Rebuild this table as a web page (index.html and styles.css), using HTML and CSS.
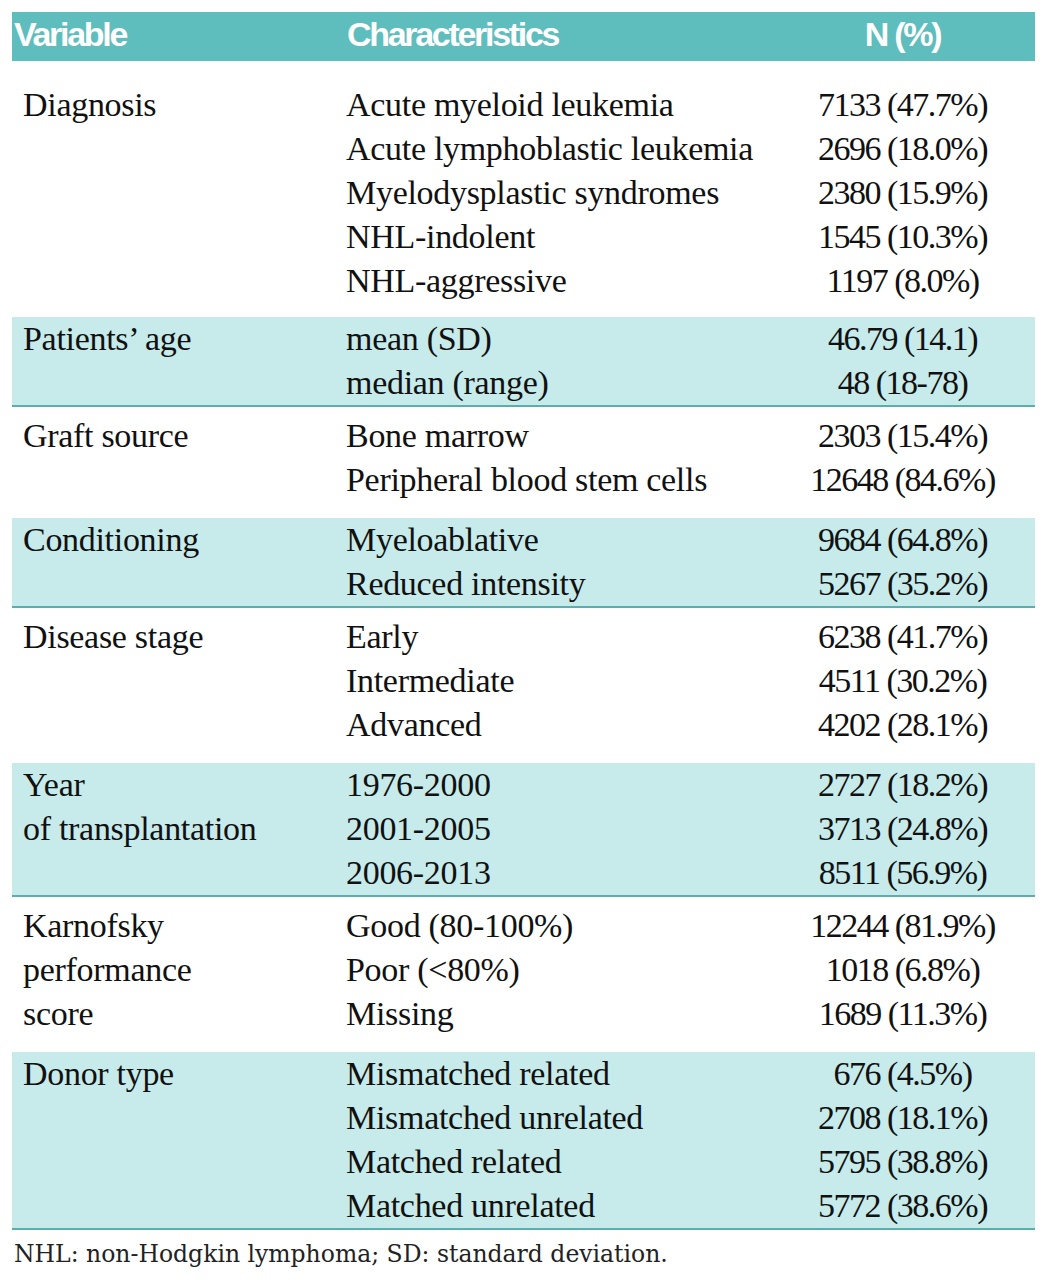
FILE: index.html
```html
<!DOCTYPE html>
<html lang="en">
<head>
<meta charset="utf-8">
<title>Patient characteristics</title>
<link rel="stylesheet" href="styles.css">
</head>
<body>
<div class="page">
  <div class="table">
    <div class="head">
      <div class="h-var">Variable</div>
      <div class="h-char">Characteristics</div>
      <div class="h-n">N (%)</div>
    </div>

    <div class="sec first">
      <div class="var">Diagnosis</div>
      <div class="char">
        <div>Acute myeloid leukemia</div>
        <div>Acute lymphoblastic leukemia</div>
        <div>Myelodysplastic syndromes</div>
        <div>NHL-indolent</div>
        <div>NHL-aggressive</div>
      </div>
      <div class="num">
        <div>7133 (47.7%)</div>
        <div>2696 (18.0%)</div>
        <div>2380 (15.9%)</div>
        <div>1545 (10.3%)</div>
        <div>1197 (8.0%)</div>
      </div>
    </div>

    <div class="sec band">
      <div class="var">Patients’ age</div>
      <div class="char">
        <div>mean (SD)</div>
        <div>median (range)</div>
      </div>
      <div class="num">
        <div>46.79 (14.1)</div>
        <div>48 (18-78)</div>
      </div>
    </div>

    <div class="sec">
      <div class="var">Graft source</div>
      <div class="char">
        <div>Bone marrow</div>
        <div>Peripheral blood stem cells</div>
      </div>
      <div class="num">
        <div>2303 (15.4%)</div>
        <div>12648 (84.6%)</div>
      </div>
    </div>

    <div class="sec band">
      <div class="var">Conditioning</div>
      <div class="char">
        <div>Myeloablative</div>
        <div>Reduced intensity</div>
      </div>
      <div class="num">
        <div>9684 (64.8%)</div>
        <div>5267 (35.2%)</div>
      </div>
    </div>

    <div class="sec">
      <div class="var">Disease stage</div>
      <div class="char">
        <div>Early</div>
        <div>Intermediate</div>
        <div>Advanced</div>
      </div>
      <div class="num">
        <div>6238 (41.7%)</div>
        <div>4511 (30.2%)</div>
        <div>4202 (28.1%)</div>
      </div>
    </div>

    <div class="sec band">
      <div class="var">Year<br>of transplantation</div>
      <div class="char">
        <div>1976-2000</div>
        <div>2001-2005</div>
        <div>2006-2013</div>
      </div>
      <div class="num">
        <div>2727 (18.2%)</div>
        <div>3713 (24.8%)</div>
        <div>8511 (56.9%)</div>
      </div>
    </div>

    <div class="sec">
      <div class="var">Karnofsky<br>performance<br>score</div>
      <div class="char">
        <div>Good (80-100%)</div>
        <div>Poor (&lt;80%)</div>
        <div>Missing</div>
      </div>
      <div class="num">
        <div>12244 (81.9%)</div>
        <div>1018 (6.8%)</div>
        <div>1689 (11.3%)</div>
      </div>
    </div>

    <div class="sec band">
      <div class="var">Donor type</div>
      <div class="char">
        <div>Mismatched related</div>
        <div>Mismatched unrelated</div>
        <div>Matched related</div>
        <div>Matched unrelated</div>
      </div>
      <div class="num">
        <div>676 (4.5%)</div>
        <div>2708 (18.1%)</div>
        <div>5795 (38.8%)</div>
        <div>5772 (38.6%)</div>
      </div>
    </div>
  </div>
  <p class="note">NHL: non-Hodgkin lymphoma; SD: standard deviation.</p>
</div>
</body>
</html>
```

FILE: styles.css
```css
html, body {
  margin: 0;
  padding: 0;
  background: #ffffff;
}

.page {
  padding: 12px 12px 0 12px;
  width: 1023px;
}

.table {
  display: flex;
  flex-direction: column;
}

.head {
  display: grid;
  grid-template-columns: 334px 424px 265px;
  height: 49px;
  align-items: center;
  background: #5ebdbd;
  color: #ffffff;
  font-family: "Liberation Sans", Arial, sans-serif;
  font-weight: bold;
  font-size: 34px;
  line-height: 40px;
  letter-spacing: -2.3px;
  padding-bottom: 6px;
  box-sizing: border-box;
}

.h-var {
  padding-left: 2px;
}

.h-char {
  padding-left: 1px;
}

.h-n {
  text-align: center;
}

.sec {
  display: grid;
  grid-template-columns: 334px 424px 265px;
  font-family: "Liberation Serif", "Times New Roman", serif;
  font-size: 34px;
  line-height: 44px;
  color: #111111;
  padding: 7px 0 16px 0;
}

.sec.first {
  padding: 22px 0 14px 0;
}

.sec.band {
  background: #c7eaea;
  padding: 0;
  border-bottom: 2px solid #5aaeae;
}

.var {
  padding-left: 11px;
  letter-spacing: -0.3px;
}

.char {
  letter-spacing: -0.3px;
}

.num {
  text-align: center;
  letter-spacing: -1.5px;
}

.note {
  margin: 8px 0 0 2px;
  font-family: "DejaVu Serif", "Liberation Serif", serif;
  font-size: 23.5px;
  line-height: 32px;
  letter-spacing: 0;
  color: #222222;
}
```
